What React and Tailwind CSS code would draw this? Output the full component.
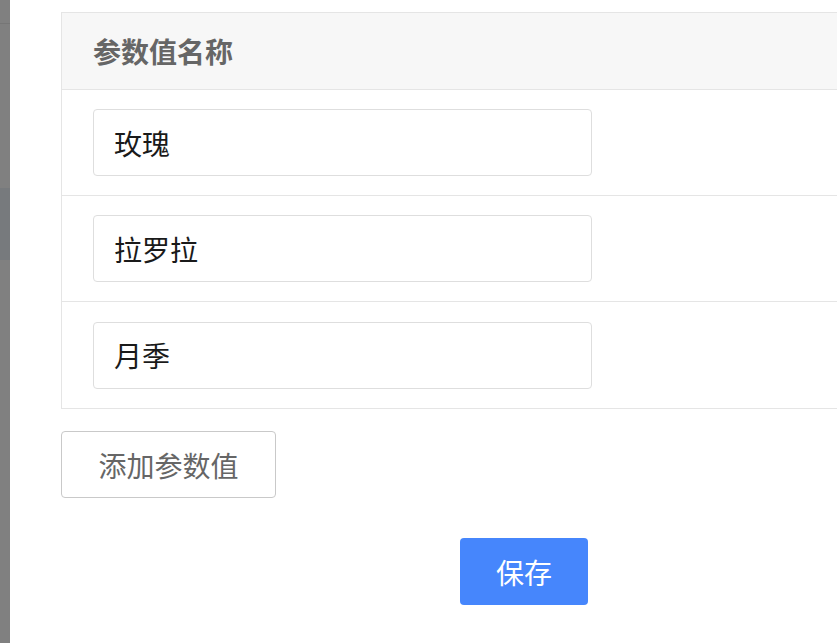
import React from 'react'

const values = ['玫瑰', '拉罗拉', '月季']

export default function App() {
  return (
    <div
      className="flex w-[837px] h-[643px] overflow-hidden bg-white"
      style={{ fontFamily: '"Noto Sans CJK SC", "Noto Sans", sans-serif' }}
    >
      {/* dimmed backdrop edge */}
      <div className="w-[10px] flex flex-col bg-[#808080] shrink-0">
        <div className="h-[24px] border-b border-[#767676] bg-[#808080]"></div>
        <div className="h-[164px]"></div>
        <div className="h-[72px] bg-[#777a7d]"></div>
      </div>

      <div className="flex-1 pl-[51px] pt-[12px]">
        <div className="w-[800px] border-l border-t border-b border-[#e5e5e5]">
          <div className="h-[77px] bg-[#f7f7f7] border-b border-[#e5e5e5] flex items-center pl-[31px]">
            <span className="text-[28px] font-bold text-[#666666]">参数值名称</span>
          </div>
          {values.map((v, i) => (
            <div
              key={v}
              className={`h-[106px] flex items-center pl-[31px] ${i < values.length - 1 ? 'border-b border-[#e5e5e5]' : 'h-[105px]'}`}
            >
              <div className="w-[499px] h-[67px] border border-[#dedede] rounded-[4px] flex items-center pl-[20px] text-[28px] text-[#1a1a1a]">
                {v}
              </div>
            </div>
          ))}
        </div>

        <button className="mt-[22px] w-[215px] h-[67px] border border-[#c9c9c9] rounded-[4px] bg-white text-[28px] text-[#666666] flex items-center justify-center">
          添加参数值
        </button>

        <button className="mt-[40px] ml-[399px] w-[128px] h-[67px] rounded-[4px] bg-[#4686fc] text-white text-[28px] flex items-center justify-center">
          保存
        </button>
      </div>
    </div>
  )
}
